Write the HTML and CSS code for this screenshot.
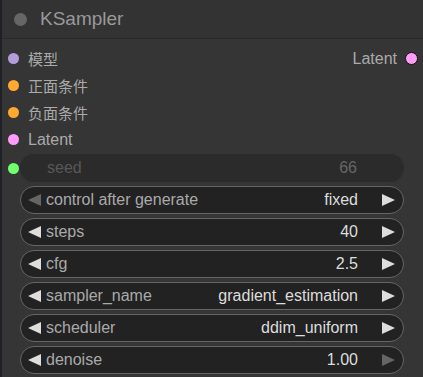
FILE: index.html
```html
<!DOCTYPE html>
<html lang="en">

<head>
    <meta charset="UTF-8">
    <title>KSampler</title>
    <link rel="stylesheet" href="styles.css">
</head>

<body>

    <div class="node">
        <div class="node_title">
            <span class="title_dot"></span>
            <span>KSampler</span>
        </div>

        <div class="node_body">
            <div class="slot_row">
                <div class="slot in">
                    <span class="dot model"></span>
                    <span class="cjk">模型</span>
                </div>
                <div class="slot out">
                    <span>Latent</span>
                    <span class="dot latent outline"></span>
                </div>
            </div>
            <div class="slot_row">
                <div class="slot in">
                    <span class="dot cond"></span>
                    <span class="cjk">正面条件</span>
                </div>
            </div>
            <div class="slot_row">
                <div class="slot in">
                    <span class="dot cond"></span>
                    <span class="cjk">负面条件</span>
                </div>
            </div>
            <div class="slot_row">
                <div class="slot in">
                    <span class="dot latent"></span>
                    <span>Latent</span>
                </div>
            </div>

            <div class="widget_row first">
                <div class="widget_slot"><span class="dot int"></span></div>
                <div class="widget disabled">
                    <span class="label">seed</span>
                    <span class="value">66</span>
                </div>
            </div>

            <div class="widget_row">
                <div class="widget_slot"></div>
                <div class="widget">
                    <span class="arrow left dim"></span>
                    <span class="label">control after generate</span>
                    <span class="value">fixed</span>
                    <span class="arrow right"></span>
                </div>
            </div>

            <div class="widget_row">
                <div class="widget_slot"></div>
                <div class="widget">
                    <span class="arrow left"></span>
                    <span class="label">steps</span>
                    <span class="value">40</span>
                    <span class="arrow right"></span>
                </div>
            </div>

            <div class="widget_row">
                <div class="widget_slot"></div>
                <div class="widget">
                    <span class="arrow left"></span>
                    <span class="label">cfg</span>
                    <span class="value">2.5</span>
                    <span class="arrow right"></span>
                </div>
            </div>

            <div class="widget_row">
                <div class="widget_slot"></div>
                <div class="widget">
                    <span class="arrow left"></span>
                    <span class="label">sampler_name</span>
                    <span class="value">gradient_estimation</span>
                    <span class="arrow right"></span>
                </div>
            </div>

            <div class="widget_row">
                <div class="widget_slot"></div>
                <div class="widget">
                    <span class="arrow left"></span>
                    <span class="label">scheduler</span>
                    <span class="value">ddim_uniform</span>
                    <span class="arrow right"></span>
                </div>
            </div>

            <div class="widget_row">
                <div class="widget_slot"></div>
                <div class="widget">
                    <span class="arrow left"></span>
                    <span class="label">denoise</span>
                    <span class="value">1.00</span>
                    <span class="arrow right dim"></span>
                </div>
            </div>
        </div>
    </div>

</body>

</html>
```

FILE: styles.css
```css
body {
    margin: 0;
    background: #353535;
    font-family: "Liberation Sans", Arial, "Noto Sans CJK SC", sans-serif;
    font-size: 16px;
}

.node {
    width: 421px;
    height: 377px;
    border-left: 2px solid #1e2227;
    background: #353535;
    overflow: hidden;
}

.node_title {
    height: 38px;
    background: #333333;
    border-bottom: 1px solid #2a2a2a;
    display: flex;
    align-items: center;
    gap: 13px;
    padding-left: 12px;
    color: #999;
    font-size: 19px;
}

.title_dot {
    width: 13px;
    height: 13px;
    border-radius: 50%;
    background: #666;
}

.node_body {
    padding-top: 6px;
}

.slot_row {
    height: 27px;
    display: flex;
    align-items: center;
    justify-content: space-between;
    color: #aaa;
}

.slot {
    display: flex;
    align-items: center;
}

.slot.in {
    gap: 9px;
    padding-left: 6px;
}

.slot.out {
    gap: 8px;
    padding-right: 5px;
}

.cjk {
    font-family: "Noto Sans CJK SC", sans-serif;
    font-size: 15px;
}

.dot {
    width: 11px;
    height: 11px;
    border-radius: 50%;
    display: inline-block;
    box-sizing: border-box;
}

.dot.model {
    background: #b39ddb;
}

.dot.cond {
    background: #ffa931;
}

.dot.latent {
    background: #ff9cf9;
}

.dot.int {
    background: #6fff6f;
}

.dot.outline {
    width: 13px;
    height: 13px;
    border: 1.5px solid #111;
}

.widget_row {
    display: flex;
    align-items: center;
    margin-top: 4px;
}

.widget_row.first {
    margin-top: 1px;
}

.widget_slot {
    width: 18px;
    display: flex;
    padding-left: 6px;
    box-sizing: border-box;
}

.widget {
    width: 384px;
    height: 28px;
    box-sizing: border-box;
    border: 1px solid #666;
    border-radius: 14px;
    background: #222;
    display: flex;
    align-items: center;
    padding: 0 8px 0 7px;
}

.widget.disabled {
    border-color: transparent;
    background: #2b2b2b;
    padding-left: 21px;
    padding-right: 22px;
}

.widget.disabled .label {
    color: #585858;
}

.widget.disabled .value {
    color: #666;
}

.label {
    color: #aaa;
    flex: 1;
    margin-left: 5px;
}

.value {
    color: #ddd;
    margin-right: 24px;
}

.arrow {
    width: 0;
    height: 0;
    border-top: 6.5px solid transparent;
    border-bottom: 6.5px solid transparent;
}

.arrow.left {
    border-right: 13px solid #ddd;
}

.arrow.right {
    border-left: 13px solid #ddd;
}

.arrow.left.dim {
    border-right-color: #666;
}

.arrow.right.dim {
    border-left-color: #666;
}
```
